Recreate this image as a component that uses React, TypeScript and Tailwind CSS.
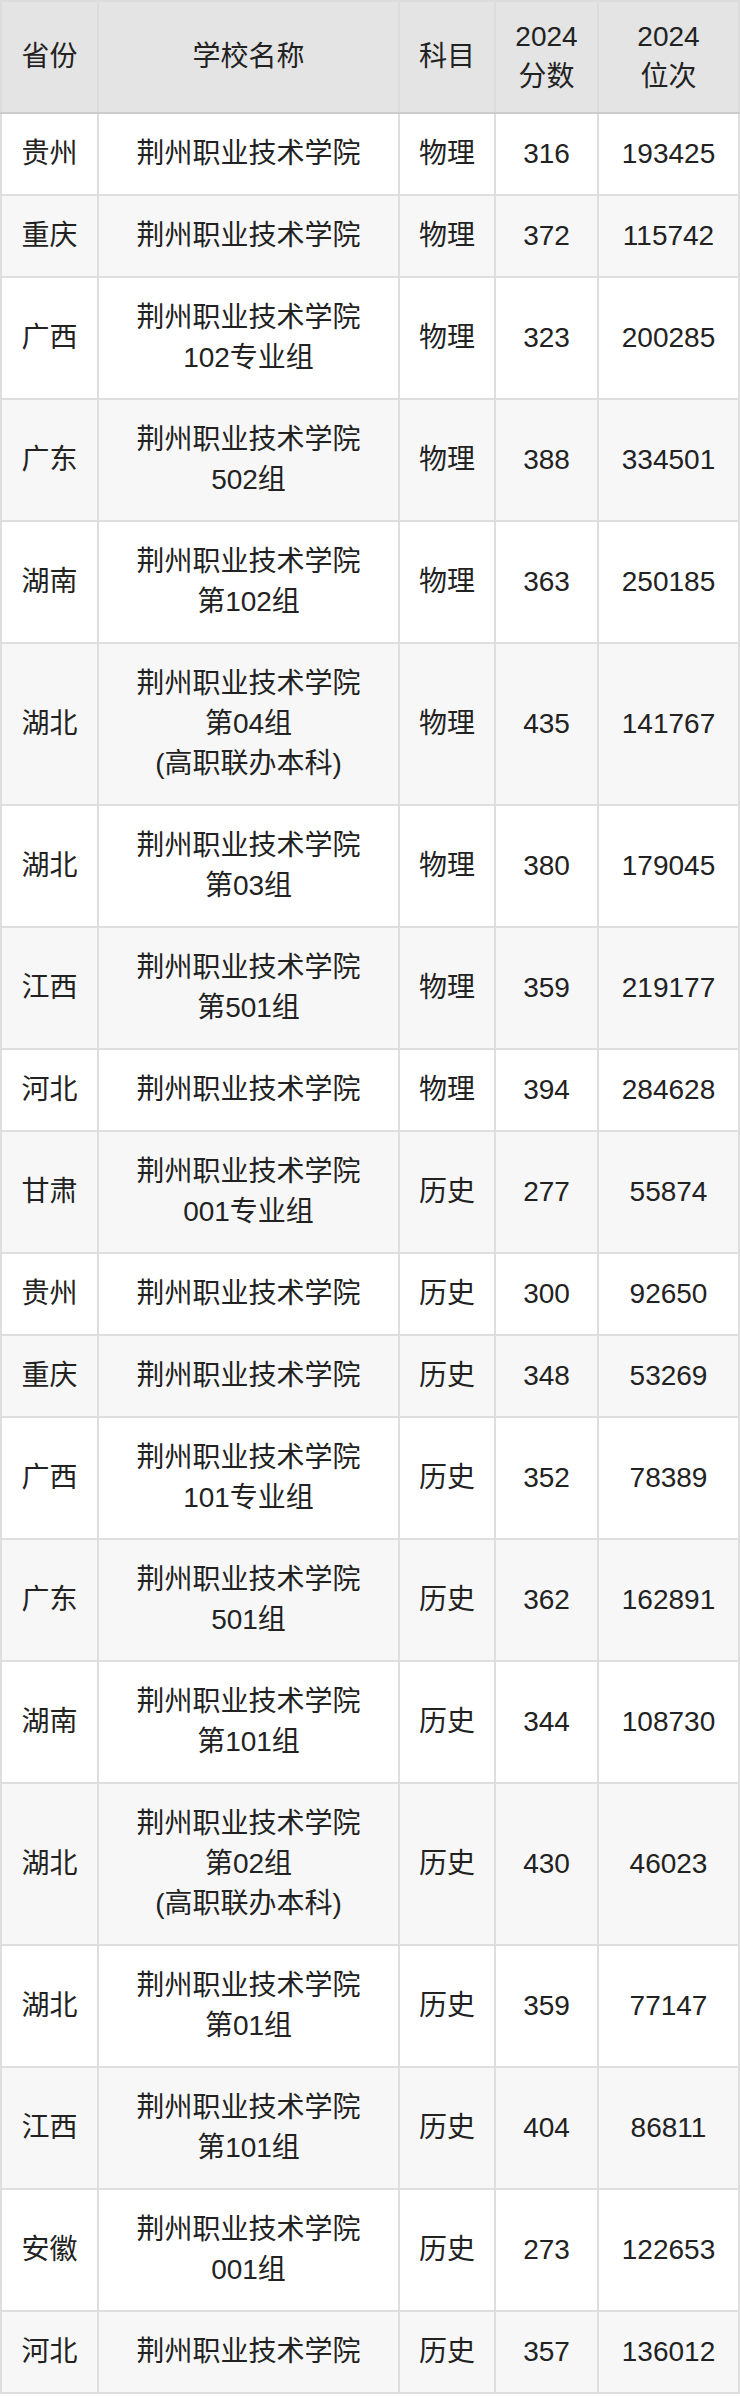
const rows: [string, string[], string, string, string][] = [
  ["贵州", ["荆州职业技术学院"], "物理", "316", "193425"],
  ["重庆", ["荆州职业技术学院"], "物理", "372", "115742"],
  ["广西", ["荆州职业技术学院", "102专业组"], "物理", "323", "200285"],
  ["广东", ["荆州职业技术学院", "502组"], "物理", "388", "334501"],
  ["湖南", ["荆州职业技术学院", "第102组"], "物理", "363", "250185"],
  ["湖北", ["荆州职业技术学院", "第04组", "(高职联办本科)"], "物理", "435", "141767"],
  ["湖北", ["荆州职业技术学院", "第03组"], "物理", "380", "179045"],
  ["江西", ["荆州职业技术学院", "第501组"], "物理", "359", "219177"],
  ["河北", ["荆州职业技术学院"], "物理", "394", "284628"],
  ["甘肃", ["荆州职业技术学院", "001专业组"], "历史", "277", "55874"],
  ["贵州", ["荆州职业技术学院"], "历史", "300", "92650"],
  ["重庆", ["荆州职业技术学院"], "历史", "348", "53269"],
  ["广西", ["荆州职业技术学院", "101专业组"], "历史", "352", "78389"],
  ["广东", ["荆州职业技术学院", "501组"], "历史", "362", "162891"],
  ["湖南", ["荆州职业技术学院", "第101组"], "历史", "344", "108730"],
  ["湖北", ["荆州职业技术学院", "第02组", "(高职联办本科)"], "历史", "430", "46023"],
  ["湖北", ["荆州职业技术学院", "第01组"], "历史", "359", "77147"],
  ["江西", ["荆州职业技术学院", "第101组"], "历史", "404", "86811"],
  ["安徽", ["荆州职业技术学院", "001组"], "历史", "273", "122653"],
  ["河北", ["荆州职业技术学院"], "历史", "357", "136012"],
];

const th = "border-2 border-[#dcdcdc] border-b-[#cbcbcb] bg-[#e4e4e4] py-[15px] font-normal leading-[40px]";
const td = "border-2 border-[#dedede] py-[20px] leading-[40px]";

export default function App() {
  return (
    <div className="w-[740px] bg-white text-[#222] text-[28px] font-['Liberation_Sans','Noto_Sans_CJK_SC',sans-serif]">
      <table className="w-full table-fixed border-collapse text-center">
        <colgroup>
          <col className="w-[97px]" />
          <col className="w-[301px]" />
          <col className="w-[96px]" />
          <col className="w-[103px]" />
          <col />
        </colgroup>
        <thead>
          <tr>
            <th className={th}>省份</th>
            <th className={th}>学校名称</th>
            <th className={th}>科目</th>
            <th className={th}>
              2024
              <br />
              分数
            </th>
            <th className={th}>
              2024
              <br />
              位次
            </th>
          </tr>
        </thead>
        <tbody>
          {rows.map(([prov, school, subject, score, rank], i) => (
            <tr key={i} className={i % 2 === 0 ? "bg-white" : "bg-[#f7f7f7]"}>
              <td className={td}>{prov}</td>
              <td className={td}>
                {school.map((line) => (
                  <div key={line}>{line}</div>
                ))}
              </td>
              <td className={td}>{subject}</td>
              <td className={td}>{score}</td>
              <td className={td}>{rank}</td>
            </tr>
          ))}
        </tbody>
      </table>
    </div>
  );
}
